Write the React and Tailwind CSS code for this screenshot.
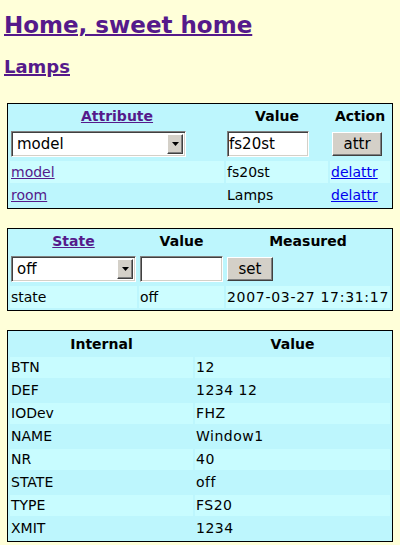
import React from "react";

const visited = "text-[#551a8b] underline";
const link = "text-[#0000ee] underline";

function FauxSelect({ width, value }) {
  return (
    <div
      className={`flex h-[26px] ${width} bg-white border border-t-[#808080] border-l-[#808080] border-b-white border-r-white shadow-[inset_1px_1px_0_#404040,inset_-1px_-1px_0_#d4d0c8]`}
    >
      <div className="flex-1 pl-[5px] text-[15px] leading-[24px]">{value}</div>
      <div className="w-[16px] my-[2px] mr-[2px] bg-[#d4d0c8] border border-t-white border-l-white border-b-[#404040] border-r-[#404040] shadow-[inset_-1px_-1px_0_#808080] flex items-center justify-center">
        <svg width="7" height="4" viewBox="0 0 7 4">
          <path d="M0 0h7L3.5 4z" fill="#000" />
        </svg>
      </div>
    </div>
  );
}

function TextBox({ width, value }) {
  return (
    <input
      readOnly
      value={value}
      className={`block h-[26px] ${width} bg-white pl-[1px] text-[15px] outline-none border border-t-[#808080] border-l-[#808080] border-b-white border-r-white shadow-[inset_1px_1px_0_#404040,inset_-1px_-1px_0_#d4d0c8]`}
    />
  );
}

function Btn({ width, label }) {
  return (
    <button className={`block h-[24px] ${width} bg-[#d4d0c8] text-[15px] leading-none border border-t-white border-l-white border-b-[#404040] border-r-[#404040] shadow-[inset_-1px_-1px_0_#808080]`}>
      {label}
    </button>
  );
}

const internals = [
  ["BTN", "12"],
  ["DEF", "1234 12"],
  ["IODev", "FHZ"],
  ["NAME", "Window1"],
  ["NR", "40"],
  ["STATE", "off"],
  ["TYPE", "FS20"],
  ["XMIT", "1234"],
];

export default function App() {
  return (
    <div className="min-h-screen bg-[#ffffd9] pt-[11px] text-[14px] text-black font-['DejaVu_Sans','Bitstream_Vera_Sans',sans-serif]">
      <h1 className="ml-[4px] text-[23px] leading-[28px] font-bold">
        <a className={`${visited} decoration-2`}>Home, sweet home</a>
      </h1>
      <h2 className="ml-[4px] mt-[17px] text-[18px] leading-[22px] font-bold">
        <a className={`${visited} decoration-2`}>Lamps</a>
      </h2>

      {/* attributes */}
      <table className="mt-[25px] ml-[7px] w-[386px] table-fixed border-separate border-spacing-[2px] border border-black bg-[#bdf6fd]">
        <colgroup>
          <col className="w-[214px]" />
          <col className="w-[102px]" />
          <col className="w-[60px]" />
        </colgroup>
        <tbody>
          <tr>
            <th className="h-[21px] p-0 text-center font-bold">
              <a className={visited}>Attribute</a>
            </th>
            <th className="p-0 text-center font-bold">Value</th>
            <th className="p-0 text-center font-bold">Action</th>
          </tr>
          <tr>
            <td className="h-[30px] p-0 pl-[1px] align-middle">
              <FauxSelect width="w-[175px]" value="model" />
            </td>
            <td className="p-0 pl-[1px] align-middle">
              <TextBox width="w-[82px]" value="fs20st" />
            </td>
            <td className="p-0 pl-[2px] align-middle">
              <Btn width="w-[50px]" label="attr" />
            </td>
          </tr>
          <tr>
            <td className="h-[22px] p-0 pl-[1px] bg-[#ccfdff]">
              <a className={visited}>model</a>
            </td>
            <td className="p-0 pl-[1px] bg-[#ccfdff]">fs20st</td>
            <td className="p-0 pl-[1px] bg-[#ccfdff]">
              <a className={link}>delattr</a>
            </td>
          </tr>
          <tr>
            <td className="h-[21px] p-0 pl-[1px]">
              <a className={visited}>room</a>
            </td>
            <td className="p-0 pl-[1px]">Lamps</td>
            <td className="p-0 pl-[1px]">
              <a className={link}>delattr</a>
            </td>
          </tr>
        </tbody>
      </table>

      {/* state */}
      <table className="mt-[19px] ml-[7px] w-[386px] table-fixed border-separate border-spacing-[2px] border border-black bg-[#bdf6fd]">
        <colgroup>
          <col className="w-[127px]" />
          <col className="w-[85px]" />
          <col className="w-[164px]" />
        </colgroup>
        <tbody>
          <tr>
            <th className="h-[21px] p-0 text-center font-bold">
              <a className={visited}>State</a>
            </th>
            <th className="p-0 text-center font-bold">Value</th>
            <th className="p-0 text-center font-bold">Measured</th>
          </tr>
          <tr>
            <td className="h-[30px] p-0 pl-[1px] align-middle">
              <FauxSelect width="w-[125px]" value="off" />
            </td>
            <td className="p-0 pl-[1px] align-middle">
              <TextBox width="w-[83px]" value="" />
            </td>
            <td className="p-0 pl-[1px] align-middle">
              <Btn width="w-[46px]" label="set" />
            </td>
          </tr>
          <tr>
            <td className="h-[22px] p-0 pl-[1px] bg-[#ccfdff]">state</td>
            <td className="p-0 pl-[1px] bg-[#ccfdff]">off</td>
            <td className="p-0 pl-[1px] bg-[#ccfdff] whitespace-nowrap tracking-[0.7px]">
              2007-03-27 17:31:17
            </td>
          </tr>
        </tbody>
      </table>

      {/* internals */}
      <table className="mt-[19px] ml-[7px] w-[386px] table-fixed border-separate border-spacing-[2px] border border-black bg-[#bdf6fd]">
        <colgroup>
          <col className="w-[183px]" />
          <col className="w-[195px]" />
        </colgroup>
        <tbody>
          <tr>
            <th className="h-[22px] p-0 text-center font-bold">Internal</th>
            <th className="p-0 text-center font-bold">Value</th>
          </tr>
          {internals.map(([k, v], i) => (
            <tr key={k} className={i % 2 === 0 ? "bg-[#c8fcff]" : ""}>
              <td className="h-[21px] p-0 pl-[1px]">{k}</td>
              <td className="p-0 pl-[1px] tracking-[0.5px]">{v}</td>
            </tr>
          ))}
        </tbody>
      </table>
    </div>
  );
}
